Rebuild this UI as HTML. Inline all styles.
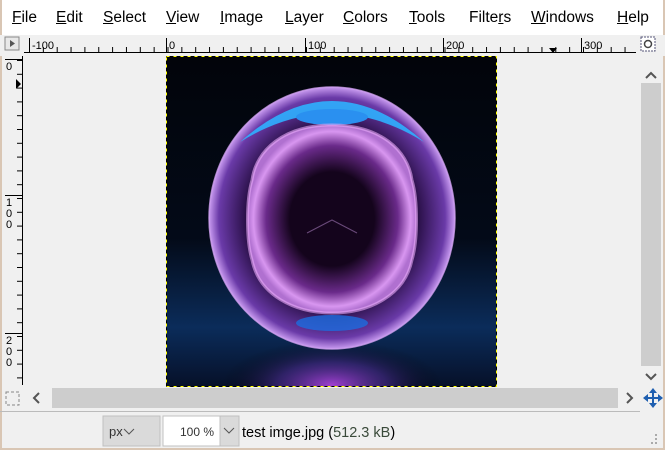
<!DOCTYPE html>
<html><head><meta charset="utf-8"><style>
body{margin:0;width:665px;height:450px;overflow:hidden;background:#f0f0f0;font-family:"Liberation Sans",sans-serif;position:relative}
.menu{position:absolute;left:0;top:0;width:665px;height:35px;background:#fff}
.menu span{position:absolute;top:9px;font-size:15.5px;color:#000}
.abs{position:absolute}
</style></head><body>
<div class="menu">
<span style="left:12px"><u>F</u>ile</span>
<span style="left:56px"><u>E</u>dit</span>
<span style="left:103px"><u>S</u>elect</span>
<span style="left:166px"><u>V</u>iew</span>
<span style="left:220px"><u>I</u>mage</span>
<span style="left:285px"><u>L</u>ayer</span>
<span style="left:343px"><u>C</u>olors</span>
<span style="left:409px"><u>T</u>ools</span>
<span style="left:469px">Filte<u>r</u>s</span>
<span style="left:531px"><u>W</u>indows</span>
<span style="left:617px"><u>H</u>elp</span>
</div>
<div class="abs" style="left:0;top:0;width:2px;height:450px;background:#d9c6b4"></div>
<div class="abs" style="right:0;top:0;width:2px;height:450px;background:#d9c6b4"></div>
<div class="abs" style="left:0;bottom:0;width:665px;height:2px;background:#d9c6b4"></div>
<svg class="abs" style="left:0;top:0" width="665" height="450">
<defs>
<clipPath id="ic"><rect x="166" y="56" width="331" height="331"/></clipPath>
<pattern id="ht" x="29" y="0" width="13.85" height="60" patternUnits="userSpaceOnUse"><line x1="0.5" y1="47" x2="0.5" y2="52" stroke="#000"/></pattern>
<pattern id="vt" x="0" y="60" width="60" height="13.8" patternUnits="userSpaceOnUse"><line x1="17" y1="0.5" x2="22" y2="0.5" stroke="#000"/></pattern>
<radialGradient id="glow" cx="0.5" cy="0.5" r="0.5"><stop offset="0" stop-color="#a040d0"/><stop offset="0.5" stop-color="#4a2a8a" stop-opacity=".6"/><stop offset="1" stop-color="#000" stop-opacity="0"/></radialGradient>
<linearGradient id="bg" x1="0" y1="0" x2="0" y2="1"><stop offset="0" stop-color="#02040a"/><stop offset="0.55" stop-color="#030a18"/><stop offset="0.82" stop-color="#0b2c5a"/><stop offset="1" stop-color="#061028"/></linearGradient>
<radialGradient id="orb" cx="0.5" cy="0.5" r="0.5"><stop offset="0.7" stop-color="#2a1048"/><stop offset="0.92" stop-color="#6a3aa8"/><stop offset="1" stop-color="#c89af0"/></radialGradient>
<radialGradient id="inner" cx="0.5" cy="0.5" r="0.5"><stop offset="0.5" stop-color="#14041c"/><stop offset="0.78" stop-color="#6a2a8a"/><stop offset="0.93" stop-color="#d896f0"/><stop offset="1" stop-color="#b070d0"/></radialGradient>
</defs>
<rect x="0" y="35" width="665" height="21" fill="#f0f0f0"/>
<rect x="5" y="37" width="14" height="13" fill="#e8e8e8" stroke="#888"/>
<path d="M10 40 L15 43.5 L10 47Z" fill="#555"/>
<line x1="24" y1="52.5" x2="636" y2="52.5" stroke="#000"/>
<rect x="29" y="35" width="607" height="18" fill="url(#ht)"/>
<g stroke="#000"><line x1="29.5" y1="38" x2="29.5" y2="53"/><line x1="166.5" y1="38" x2="166.5" y2="53"/><line x1="305.5" y1="38" x2="305.5" y2="53"/><line x1="443.5" y1="38" x2="443.5" y2="53"/><line x1="581.5" y1="38" x2="581.5" y2="53"/></g>
<g font-size="11" font-family="Liberation Sans" fill="#000"><text x="32" y="49">-100</text><text x="169" y="49">0</text><text x="308" y="49">100</text><text x="446" y="49">200</text><text x="584" y="49">300</text></g>
<path d="M549 48 L557 48 L553 53Z" fill="#000"/>
<rect x="641" y="37" width="14" height="14" fill="#fff" stroke="#557" stroke-dasharray="2 1"/>
<circle cx="648" cy="44" r="3.5" fill="none" stroke="#444" stroke-width="1.5"/>
<line x1="22.5" y1="56" x2="22.5" y2="385" stroke="#000"/>
<rect x="0" y="60" width="23" height="325" fill="url(#vt)"/>
<g stroke="#000"><line x1="5" y1="59.5" x2="23" y2="59.5"/><line x1="5" y1="195.5" x2="23" y2="195.5"/><line x1="5" y1="333.5" x2="23" y2="333.5"/></g>
<g font-size="11" font-family="Liberation Sans" fill="#000"><text x="6" y="70">0</text><text x="6" y="206">1</text><text x="6" y="217">0</text><text x="6" y="228">0</text><text x="6" y="344">2</text><text x="6" y="355">0</text><text x="6" y="366">0</text></g>
<path d="M16 79 L21 84 L16 89Z" fill="#000"/>
<g clip-path="url(#ic)">
<rect x="166" y="56" width="331" height="331" fill="url(#bg)"/>
<ellipse cx="332" cy="385" rx="110" ry="45" fill="url(#glow)"/>
<ellipse cx="332" cy="218" rx="123" ry="131" fill="url(#orb)"/>
<ellipse cx="332" cy="218" rx="123" ry="131" fill="none" stroke="#d0a0f0" stroke-width="1.5" opacity=".8"/>
<path d="M240 142 Q332 60 424 142 Q332 85 240 142Z" fill="#2fb0ff" opacity=".9"/>
<ellipse cx="332" cy="117" rx="36" ry="8" fill="#2a90f0"/>
<ellipse cx="332" cy="323" rx="36" ry="8" fill="#1d6de0" opacity=".8"/>
<path d="M332 125 C380 125 408 150 412 180 C418 200 418 240 412 260 C405 295 370 313 332 313 C294 313 259 295 252 260 C246 240 246 200 252 180 C256 150 284 125 332 125Z" fill="url(#inner)"/>
<path d="M332 125 C380 125 408 150 412 180 C418 200 418 240 412 260 C405 295 370 313 332 313 C294 313 259 295 252 260 C246 240 246 200 252 180 C256 150 284 125 332 125Z" fill="none" stroke="#e8a8f8" stroke-width="3" opacity=".6"/>
<path d="M307 233 L332 220 L357 233" fill="none" stroke="#6a4a7a" stroke-width="1"/>
</g>
<rect x="166.5" y="56.5" width="330" height="330" fill="none" stroke="#ff0" stroke-dasharray="4 3"/>
<rect x="166.5" y="56.5" width="330" height="330" fill="none" stroke="#000" stroke-dasharray="3 4" stroke-dashoffset="4"/>
<rect x="641" y="56" width="20" height="330" fill="#f0f0f0"/>
<path d="M646 78 L651 73 L656 78" fill="none" stroke="#555" stroke-width="2"/>
<rect x="641" y="83" width="20" height="283" fill="#cdcdcd"/>
<path d="M646 374 L651 379 L656 374" fill="none" stroke="#555" stroke-width="2"/>
<rect x="6" y="392" width="13" height="13" fill="none" stroke="#888" stroke-dasharray="3 2"/>
<path d="M39 393 L34 398 L39 403" fill="none" stroke="#555" stroke-width="2"/>
<rect x="52" y="388" width="566" height="20" fill="#cdcdcd"/>
<path d="M627 393 L632 398 L627 403" fill="none" stroke="#555" stroke-width="2"/>
<g fill="#1f5fb0"><path d="M653 388 L657 393 L649 393Z"/><path d="M653 408 L657 403 L649 403Z"/><path d="M643 398 L648 394 L648 402Z"/><path d="M663 398 L658 394 L658 402Z"/><rect x="652" y="392" width="2" height="12"/><rect x="647" y="397" width="12" height="2"/></g>
<line x1="0" y1="411.5" x2="640" y2="411.5" stroke="#bbb"/>
<rect x="103" y="416" width="57" height="30" fill="#dadada" stroke="#c0c0c0"/>
<text x="109" y="436" font-size="13" fill="#333" font-family="Liberation Sans">px</text>
<path d="M124 429 L129 434 L134 429" fill="none" stroke="#555"/>
<rect x="163" y="416" width="57" height="30" fill="#fff" stroke="#c0c0c0"/>
<text x="180" y="436" font-size="12" fill="#333" font-family="Liberation Sans">100 %</text>
<rect x="220" y="416" width="19" height="30" fill="#dadada" stroke="#c0c0c0"/>
<path d="M224 428 L229 433 L234 428" fill="none" stroke="#555"/>
<text x="242" y="437" font-size="14.5" font-family="Liberation Sans" fill="#000">test imge.jpg (<tspan fill="#3a4a3a">512.3 kB</tspan>)</text>
<g fill="#aaa"><rect x="655" y="438" width="2" height="2"/><rect x="651" y="442" width="2" height="2"/><rect x="655" y="442" width="2" height="2"/><rect x="655" y="434" width="2" height="2"/></g>
</svg>
</body></html>
